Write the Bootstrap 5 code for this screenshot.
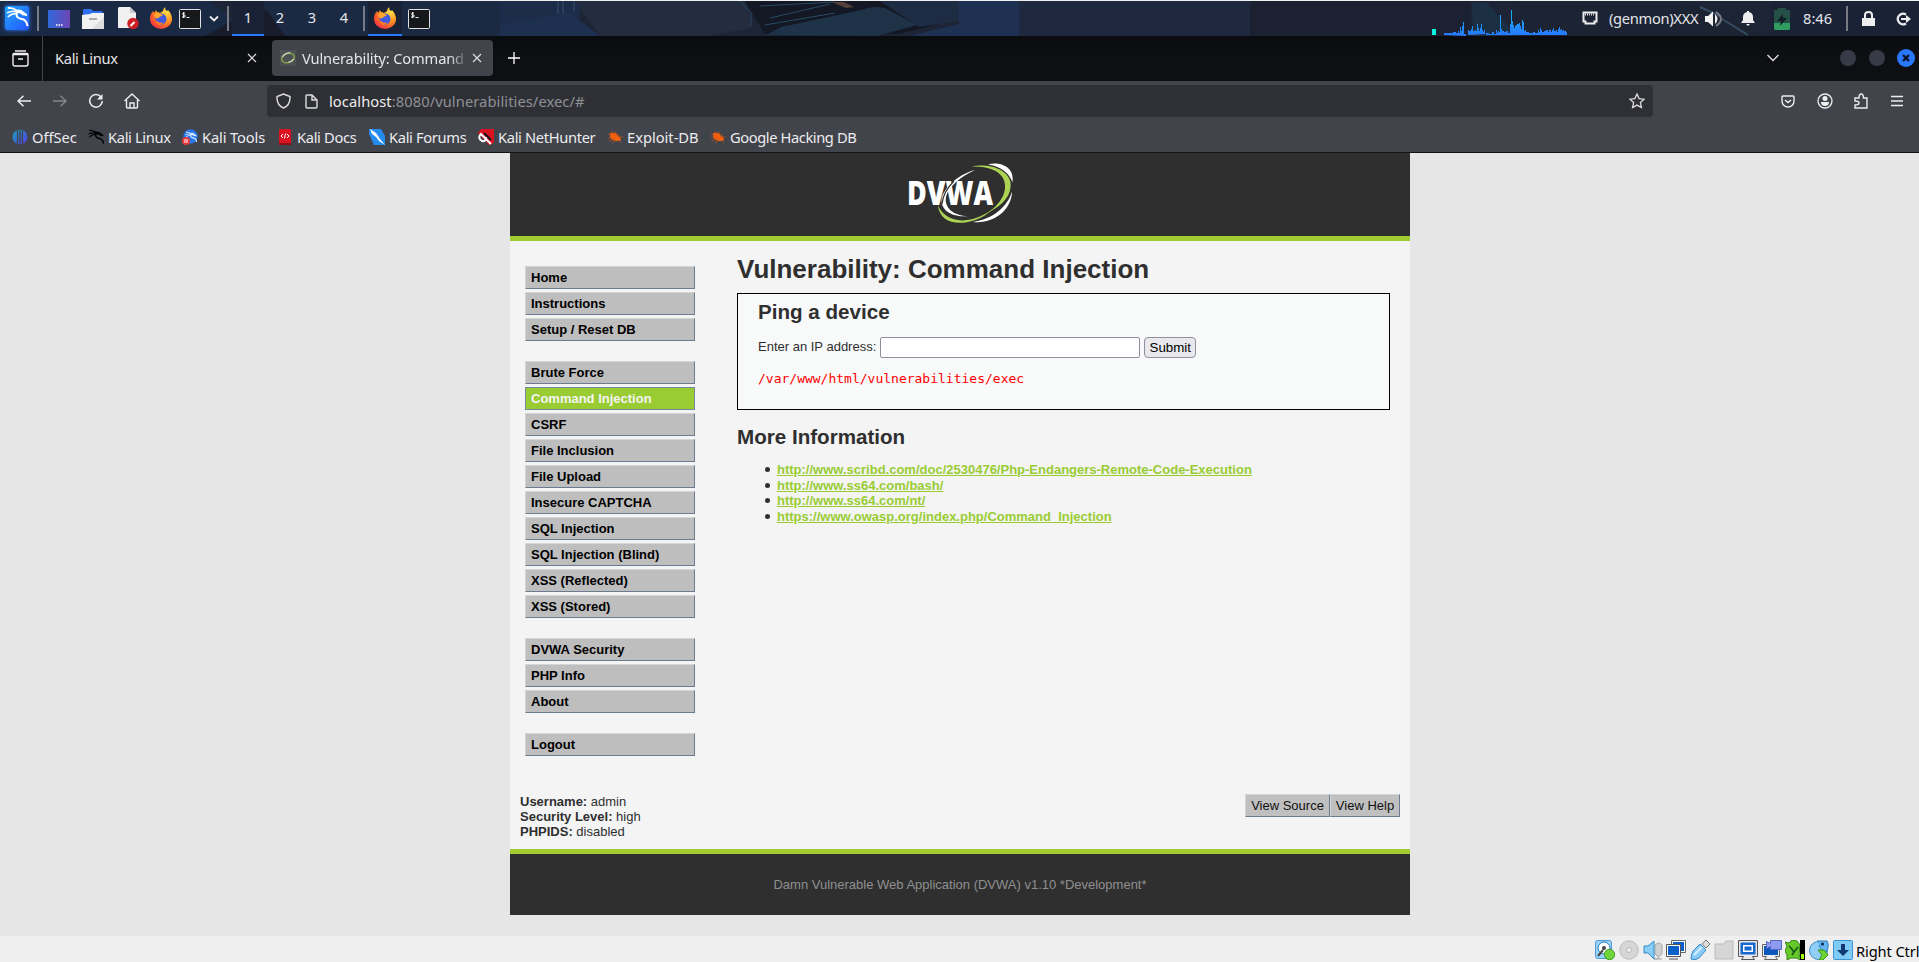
<!DOCTYPE html>
<html lang="en">
<head>
<meta charset="utf-8">
<title>Vulnerability: Command Injection</title>
<link href="https://cdn.jsdelivr.net/npm/bootstrap@5.3.0/dist/css/bootstrap.min.css" rel="stylesheet">
<style>
body{width:1919px;height:962px;overflow:hidden;background:#e6e6e6;font-family:"Noto Sans",sans-serif;font-size:14.67px;line-height:20px}
svg{display:block;flex:none}
.panel{height:36px;border-top:1px solid #eef1f0;color:#e4e6ea;position:relative;background:#1d2436}
.wall{position:absolute;inset:0}
.panel>.d-flex{position:relative}
.sep{width:2px;height:25px;background:#777b83;flex:none}
.ws{width:32px;height:35px;line-height:32px;text-align:center;border-bottom:2px solid transparent}
.ws.on{border-color:#2777ff;background:#182135}
.tabs{height:45px;background:linear-gradient(#0a0b0e,#0e0f13 40%);color:#e6e6e8;padding-bottom:1px}
.listall{width:43px;height:45px;border-right:1px solid #44464b}
.tab-on{width:221px;height:36px;border-radius:4px;background:#42444b;padding:0 12px 0 8px}
.fade-title{width:168px;white-space:nowrap;letter-spacing:-.16px;-webkit-mask-image:linear-gradient(90deg,#000 148px,transparent 166px);mask-image:linear-gradient(90deg,#000 148px,transparent 166px)}
.tools{height:41px;background:#42444c;padding-bottom:1px}
.urlbar{width:1386px;height:32px;border-radius:4px;background:#2f3035;color:#8f9095}
.marks{height:31px;background:#42444c;border-bottom:1px solid #121317;color:#ececee;padding:0 0 1px 12px}
.marks>div{gap:4px;white-space:nowrap;flex:none;letter-spacing:-.33px}
.marks>.wide{letter-spacing:0}
.dot{width:16px;height:16px;border-radius:50%;background:#373b48}
.page{height:783px;font-family:"Liberation Sans",sans-serif;font-size:13px;line-height:15px;color:#2f2f2f}
.shell{width:900px;background:#f4f4f4}
.top{height:88px;border-bottom:5px solid #a0cc32;background:#2f2f2f}
.mid{height:608px}
.side{width:170px;margin:25px 0 0 15px}
.side a{display:block;height:23px;margin-bottom:3px;padding:3px 5px;border:1px solid;border-color:#d3d5d7 #6d7b92 #6d7b92 #d3d5d7;background:#bebebe;color:#000;font-weight:bold;text-decoration:none;line-height:15px}
.side .last-link{margin-bottom:20px}
.side a.here{background:#9c3;color:#f4f4f4;border-color:#7489a0}
.main{width:653px;margin:12px 0 0 42px}
.main h1{font-size:26px;line-height:32px;font-weight:bold;margin:0 0 8px}
.main h2{font-size:20.6px;line-height:24px;font-weight:bold;margin:0}
.ping{height:117px;border:1px solid #000;background:#f8fafa;padding:6px 20px}
.ip{width:260px;height:21px;border:1px solid #8f8f9d;border-radius:2px;background:#fff;margin:0 4px}
.go{width:52px;height:21px;border:1px solid #8f8f9d;border-radius:4px;background:#e9e9ed;font-size:13.33px;line-height:19px;padding:0;color:#000}
.ping pre{font:13px/16px "DejaVu Sans Mono",monospace;color:red;margin:13px 0 0}
.refs{margin:13px 0 0;padding-left:40px;line-height:15.6px;list-style:none}
.refs li::before{content:"";display:inline-block;width:5px;height:5px;border-radius:50%;background:#2f2f2f;margin:0 7px 2px -12px;vertical-align:middle}
.refs a{color:#9c3;font-weight:bold}
.foot{height:66px;border-top:5px solid #a0cc32;background:#2f2f2f;color:#8f8f8f;padding-top:23px}
.vb{height:23px;border:1px solid;border-color:#d3d5d7 #6d7b92 #6d7b92 #d3d5d7;background:#c0c0c0;color:#111;font-size:13px;line-height:21px;text-align:center}
.status{height:26px;background:#efefef;color:#000;padding-left:1595px}
</style>
</head>
<body>
<svg width="0" height="0" class="position-absolute" aria-hidden="true"><defs>
<linearGradient id="kg" x2="1" y2="1"><stop stop-color="#22a5f8"/><stop offset="1" stop-color="#2456ff"/></linearGradient>
<linearGradient id="dg" x2="1"><stop stop-color="#3169dc"/><stop offset="1" stop-color="#6d45b5"/></linearGradient>
<radialGradient id="fg" cx=".75" cy=".2" r=".9"><stop stop-color="#ffe14a"/><stop offset=".5" stop-color="#ff9320"/><stop offset="1" stop-color="#f4303f"/></radialGradient>
<linearGradient id="og" x2="1" y2="1"><stop stop-color="#13a6b8"/><stop offset="1" stop-color="#5935e8"/></linearGradient>
<linearGradient id="cg" x1="0" y1="0" x2="0" y2="26" gradientUnits="userSpaceOnUse"><stop stop-color="#17b6ee"/><stop offset="1" stop-color="#2777ff"/></linearGradient>
<symbol id="dragon" viewBox="0 0 24 24"><g fill="none" stroke="currentColor" stroke-width="1.800"><path d="M2 2q7 0 11 4M1 7.500q6-3 12-1M2 12q4-4 10-4"/><path d="M13 6q-3 4 0 6.500Q15 14 18.500 14.500 22.500 16 23.500 22" stroke-width="2.200"/></g><path fill="currentColor" d="M10 5q5-3 9 1l4 3v2l-5-1q-3-3-7-2z"/></symbol>
<symbol id="fox" viewBox="0 0 22 22"><path fill="url(#fg)" d="M15 0q0 3 2 4l1-1q4 4 4 9a11 10 0 0 1-22 0Q0 7 3 4l1 2 2-3 1 2q2 0 3 1l3-2q0-2 2-4z"/><circle cx="11" cy="12" r="5.500" fill="#3d5ae0"/><path fill="#ffa62b" d="M4 7q4-2 7 0l2 2q-4 0-4 2-3 1-4-1z"/><path d="M6 13q3 4 8 2-2 3-5 3-3-1-3-5z" fill="#ff7b25"/></symbol>
<symbol id="term" viewBox="0 0 22 20"><rect x=".5" y=".5" width="21" height="19" rx="1" fill="#171819" stroke="#dfe1e3"/><path d="M6 4H4v2h2v2H3M4.500 3v6M7.500 8.500h3" stroke="#eee" fill="none"/></symbol>
<symbol id="bug" viewBox="0 0 16 14"><path fill="#f2600e" d="M3 3l2 0q4-1 6 3l2 1 1 3-2 1-3 0q-4 0-6-4z"/><path d="M1 4l4 1M4 1l3 3M8 1l2 4M12 4l-1 3M12 7h4M2 11l5-2M5 13l4-3M1 8l4 0M12 10l2 3" stroke="#b9511e" stroke-width=".8" fill="none"/></symbol>
</defs></svg>

<header class="panel">
  <svg class="wall" width="1919" height="35"><path fill="#1b2a44" d="M0 0h210l45 35H0z"/><path fill="#181c2b" d="M205 35l45-25h25l20 25z"/><path fill="#1c2942" d="M260 0h240v35H285z"/><path fill="#1d2c49" d="M500 0h80v35h-80z"/><path fill="#242c40" d="M575 0h170l7 27-45 8H600z"/><path fill="#1e3050" d="M500 24l70-12 30 23H500z"/><path d="M558 0v13M563 0v13M574 0v10" stroke="#35536b" fill="none"/><path d="M740 0l11 12v13" stroke="#2b4663" fill="none"/><path fill="#131824" d="M745 0h200l14 18-60 15H765z"/><path fill="#1e3248" d="M766 34l15-8 80-17q12-5 24-2l32 17-40 11z"/><path d="M760 5l75-4M770 17l60-14M765 24l70-12" stroke="#274c64" stroke-width="1" fill="none"/><path fill="#54403b" d="M832 1h12l10 5-8 1z"/><path fill="#1d2c42" d="M880 0h79v20l-40 6z"/><path fill="#1f3152" d="M959 0h60v35h-110l50-12z"/><path fill="#1e2940" d="M1019 0h370l20 35H1019z"/><path fill="#1c2131" d="M1250 0h220v35h-220z"/><path fill="#1c3044" d="M1472 2h15l30 33h-44z"/><path fill="#1c2332" d="M1517 0h170l80 35h-240z"/><path d="M1700 6l20 9M1722 18l26 16" stroke="#354d62" stroke-width="2"/><path fill="#1a2236" d="M1770 0h149v35h-149z"/></svg>
  <div class="d-flex align-items-center h-100">
    <svg width="24" height="24" style="margin:0 0 1px 5px;box-shadow:0 0 4px #2777ff;color:#fff"><rect width="24" height="24" rx="2" fill="url(#kg)"/><use href="#dragon" width="24" height="22"/></svg>
    <i class="sep" style="margin-left:8px"></i>
    <svg width="22" height="18" style="margin-left:9px"><rect width="22" height="18" rx="1" fill="url(#dg)"/><path d="M8 15h1.500m1 0h1.500m1 0h1.500" stroke="#fff" stroke-width="1.500"/></svg>
    <svg width="22" height="20" style="margin-left:12px"><path fill="#2f6ff0" d="M2 0h7l2 2h8q2 0 2 2v4H1V1z"/><path fill="#f1f1f1" d="M0 6l8-1 2-1h12v16H0z"/><path fill="#ddd" d="M22 8v12H10z"/><path d="M7 10h8" stroke="#aaa" stroke-width="2"/></svg>
    <svg width="21" height="23" style="margin-left:14px"><path fill="#f0f0f0" d="M1 0h11l6 6v15H0V1z"/><path fill="#c7c7c7" d="M12 0l6 6h-6z"/><circle cx="15" cy="16.500" r="5.700" fill="#ce1e23"/><path d="M12.500 19l4-4" stroke="#fff" stroke-width="2"/></svg>
    <svg width="22" height="22" style="margin:0 0 1px 11px"><use href="#fox"/></svg>
    <svg width="22" height="20" style="margin-left:7px"><use href="#term"/></svg>
    <svg width="10" height="8" style="margin-left:8px"><path d="M1 1.500l4 4 4-4" fill="none" stroke="#eee" stroke-width="1.800"/></svg>
    <i class="sep" style="margin-left:8px"></i>
    <div class="ws on" style="margin-left:3px">1</div><div class="ws">2</div><div class="ws">3</div><div class="ws">4</div>
    <i class="sep" style="margin-left:3px"></i>
    <div class="ws on d-flex align-items-center justify-content-center" style="margin-left:3px;width:34px"><svg width="22" height="22"><use href="#fox"/></svg></div>
    <svg width="22" height="20" style="margin-left:6px"><use href="#term"/></svg>
    <svg width="141" height="26" style="margin:9px 0 0 1002px"><path fill="#00f5dc" d="M0 19h4v6H0z"/><path fill="url(#cg)" d="M12 25v-2h9v-1h3v1h2v-2h1v2h1v-6h1v4h1v-5h1v-4h1v12h2v2zM36 25v-5h1v1h2v-2h1v-3h1v5h2v-1h1v1h1v-7h1v4h1v3h1v-3h1v-4h1v6h1v2h1v-2h1v4zM54 25v-2h3v1h3v-2h2v2h2v-4h1v3h1v-2h1v1h1V5h1v14h1v2h2v1h2v-1h2v2h2v-9h1V-1h1v12h1v4h1v3h1v-2h1v-1h1v-1h2v-1h1v3h1v3h1v-9h1v2h1v9h1v-1h1v2h3v1h4v-1h2v1h3v-3h1v2h1v-4h1v2h1v2h2v-1h2v-1h2v2h1v-2h2v2h1v-2h1v-2h1v3h2v-1h1v2h1v-3h1v-2h1v3h1v-1h1v2h1v-1h1v1h2v1h1v3z"/></svg>
    <svg width="17" height="15" style="margin:0 0 1px 9px"><path d="M1.500 1.500h13v9h-2v2h-9v-2h-2z" fill="none" stroke="#ededed" stroke-width="2"/><path d="M3 3.500h10" stroke="#ddd" stroke-width="2" stroke-dasharray="1 1"/></svg>
    <span style="margin:0 0 2px 10px;width:89px;letter-spacing:-.3px">(genmon)XXX</span>
    <svg width="18" height="18" style="margin-left:7px"><path fill="#f2f2f2" d="M0 6h3l5-4.500v15L3 12H0z"/><path fill="#eee" d="M10 4q5 5 0 10z"/><path d="M11 2q10 7 0 14" stroke="#777d87" stroke-width="2" fill="none"/></svg>
    <svg width="14" height="15" style="margin-left:18px"><path fill="#eee" d="M0 12l2-3V6q0-4 4-5V0h2v1q4 1 4 5v3l2 3zM5 13h4l-2 2z"/></svg>
    <svg width="16" height="22" style="margin-left:19px"><path fill="#245047" d="M4 0h8v2h4v20H0V2h4z"/><path fill="#2f9d60" d="M0 15h16v5q0 2-2 2H2q-2 0-2-2z"/><path fill="#111d24" d="M9 6l-6 7h4l-1 5 7-8H9z"/></svg>
    <span style="margin:0 0 2px 13px;width:31px;white-space:nowrap">8:46</span>
    <i class="sep" style="margin-left:12px"></i>
    <svg width="13" height="15" style="margin-left:14px"><path fill="#eee" d="M0 7h13v8H0z"/><path d="M3 7V4q0-3 3.500-3T10 4v3" fill="none" stroke="#eee" stroke-width="2"/></svg>
    <svg width="15" height="14" style="margin-left:21px"><path d="M10 2.500a5.300 5.300 0 1 0 0 9" fill="none" stroke="#eee" stroke-width="2.200"/><path fill="#eee" d="M5 6h5V3l5 4-5 4V8H5z"/></svg>
  </div>
</header>

<nav class="tabs d-flex align-items-center">
  <div class="listall d-flex align-items-center ps-2"><svg width="17" height="17" style="margin-left:4px" fill="none" stroke="#eee" stroke-width="1.400"><path d="M3 1h11M1 4.500h15M1 4.500q0-1 1-1h13q1 0 1 1V14q0 2-2 2H3q-2 0-2-2zM6 9h5"/></svg></div>
  <div class="d-flex align-items-center" style="width:229px;padding-left:12px"><span style="letter-spacing:-.33px">Kali Linux</span><svg class="ms-auto" style="margin-right:15px" width="10" height="10"><path d="M1 1l8 8M9 1L1 9" stroke="#ddd" stroke-width="1.200"/></svg></div>
  <div class="tab-on d-flex align-items-center">
    <svg width="16" height="16"><rect width="16" height="16" fill="#4d5055"/><g fill="none" transform="rotate(-20 8 8)"><ellipse cx="8" cy="8" rx="6.500" ry="4.500" stroke="#7f9e45" stroke-width="1.600"/><path d="M3 5q5-3 9-1M13 11q-3 2-6 1" stroke="#e0e3d8"/></g></svg>
    <span class="fade-title" style="margin-left:6px">Vulnerability: Command In</span>
    <svg width="10" height="10" style="margin-left:2px"><path d="M1 1l8 8M9 1L1 9" stroke="#ddd" stroke-width="1.200"/></svg>
  </div>
  <svg width="12" height="12" style="margin-left:15px"><path d="M6 0v12M0 6h12" stroke="#fff" stroke-width="1.300"/></svg>
  <svg width="12" height="8" style="margin-left:1247px"><path d="M.500 1l5.500 5.500L11.500 1" stroke="#ddd" stroke-width="1.400" fill="none"/></svg>
  <i class="dot" style="margin-left:61px"></i><i class="dot" style="margin-left:13px"></i>
  <svg width="18" height="18" style="margin-left:12px"><circle cx="9" cy="9" r="9" fill="#2777ff"/><path d="M6 6l6 6M12 6l-6 6" stroke="#0b1020" stroke-width="2.300"/></svg>
</nav>

<div class="tools d-flex align-items-center">
  <svg width="14" height="12" style="margin-left:17px"><path d="M14 6H1M6.500.700L1 6l5.500 5.300" fill="none" stroke="#eee" stroke-width="1.500"/></svg>
  <svg width="14" height="12" style="margin-left:22px"><path d="M0 6h13M7.500.700L13 6l-5.500 5.300" fill="none" stroke="#84868b" stroke-width="1.500"/></svg>
  <svg width="16" height="16" style="margin-left:21px"><path d="M13 4a6.300 6.300 0 1 0 1.300 4" fill="none" stroke="#eee" stroke-width="1.500"/><path d="M14.500 1v5.500H9z" fill="#eee"/></svg>
  <svg width="16" height="16" style="margin-left:20px" fill="none" stroke="#eee" stroke-width="1.400"><path d="M.500 8L8 1l7.500 7M2.500 7v7q0 1 1 1h9q1 0 1-1V7M6 15v-5h4v5"/></svg>
  <div class="urlbar d-flex align-items-center" style="margin-left:127px">
    <svg width="15" height="16" style="margin-left:9px"><path d="M7.500 1L14 3.500q.5 8.500-6.500 11.500Q.5 12 1 3.500z" fill="none" stroke="#ddd" stroke-width="1.400"/></svg>
    <svg width="13" height="15" style="margin-left:14px"><path d="M2 1h5l5 5v7q0 1-1 1H2q-1 0-1-1V2q0-1 1-1zM7 1v5h5" fill="none" stroke="#ddd" stroke-width="1.400"/></svg>
    <span style="margin:0 0 1px 11px;letter-spacing:.09px"><span style="color:#eee">localhost</span>:8080/vulnerabilities/exec/#</span>
    <svg class="ms-auto" style="margin-right:8px" width="16" height="16"><path d="M8 1l2.100 4.600 5 .6-3.700 3.400 1 5L8 12.100l-4.400 2.500 1-5L.900 6.200l5-.6z" fill="none" stroke="#ddd" stroke-width="1.300"/></svg>
  </div>
  <svg width="14" height="13" style="margin-left:128px" fill="none" stroke="#eee" stroke-width="1.400"><path d="M1 2q0-1 1-1h10q1 0 1 1v4a6 6 0 0 1-12 0zM4 5l3 2.500L10 5"/></svg>
  <svg width="16" height="16" style="margin-left:22px"><circle cx="8" cy="8" r="7" fill="none" stroke="#eee" stroke-width="1.300"/><circle cx="8" cy="5.500" r="2.500" fill="#eee"/><path d="M4 9h8q0 4-4 4T4 9z" fill="#eee"/></svg>
  <svg width="14" height="17" style="margin-left:21px"><path d="M1 5h4q0-4 2.200-4T9.500 5H13v10H1v-3q4 0 4-2T1 8z" fill="none" stroke="#eee" stroke-width="1.400"/></svg>
  <svg width="12" height="12" style="margin-left:23px"><path d="M0 1.500h12M0 6h12M0 10.500h12" stroke="#eee" stroke-width="1.300"/></svg>
</div>

<div class="marks d-flex align-items-center">
  <div class="wide d-flex align-items-center" style="width:76px"><svg width="16" height="16"><circle cx="8" cy="8" r="7.500" fill="url(#og)"/><path d="M8 0v16M5 0q1.500 8 0 16M11 0q-1.500 8 0 16" stroke="#42444c" stroke-width="1.300" fill="none"/></svg>OffSec</div>
  <div class="d-flex align-items-center" style="width:94px"><svg width="16" height="16" style="color:#000"><use href="#dragon"/></svg>Kali Linux</div>
  <div class="d-flex align-items-center" style="width:95px;letter-spacing:-.12px"><svg width="16" height="16" style="color:#dbeaff"><circle cx="8.500" cy="7.500" r="7.200" fill="#2878ec"/><use href="#dragon" x="3" y="2" width="12" height="12"/><circle cx="4" cy="12" r="4" fill="#e83939"/><path d="M3 10v4M5 10v4" stroke="#fff"/></svg>Kali Tools</div>
  <div class="d-flex align-items-center" style="width:92px"><svg width="16" height="16"><rect x="2" width="12" height="16" rx="1" fill="#db1220"/><path d="M2 14h12v2H2z" fill="#8d0d18"/><path d="M6 5L4 7l2 2M10 5l2 2-2 2M8.500 4.500l-1 5" stroke="#fff" fill="none"/></svg>Kali Docs</div>
  <div class="d-flex align-items-center" style="width:109px"><svg width="16" height="16"><path fill="#248bf1" d="M0 0h16v16H0z"/><path fill="#42444c" d="M0 5l5 11H0zM16 0v7L12 0z"/><path fill="#fff" d="M1 0l6 4 4 6 5 6-6-4-3-4-4-3z"/></svg>Kali Forums</div>
  <div class="d-flex align-items-center" style="width:129px"><svg width="16" height="16"><path fill="#db1220" d="M3 0h13v13q-2 3-5 3L0 4z"/><path d="M13 15L3 5q-4 4 1 7 4 1 4-4" stroke="#fff" stroke-width="2" fill="none"/><path d="M6 4l7 7" stroke="#171717" stroke-width="2"/></svg>Kali NetHunter</div>
  <div class="wide d-flex align-items-center" style="width:103px"><svg width="16" height="14"><use href="#bug"/></svg>Exploit-DB</div>
  <div class="d-flex align-items-center" style="letter-spacing:-.4px"><svg width="16" height="14"><use href="#bug"/></svg>Google Hacking DB</div>
</div>

<main class="page">
  <div class="shell mx-auto" style="position:relative;left:.5px">
    <div class="top"><svg width="120" height="80" style="margin-left:390px">
      <path fill="#fff" d="M75 17C60 21 46 32 42 44c-3 11 8 21 26 19C54 63 44 55 46 44 48 34 60 24 75 17z"/>
      <path fill="#acd354" d="M70 13.700C87 10 107 15 110.500 29 112 42 104 51 88 60 101 50 108 39 104 27 100 17 86 13 70 13.700z"/>
      <text x="7" y="51.500" font-family="Open Sans,Noto Sans,sans-serif" font-weight="800" font-size="33" fill="#fff" textLength="86" lengthAdjust="spacingAndGlyphs">DVWA</text>
      <path d="M54 28Q43 39 42 51" stroke="#2f2f2f" stroke-width="1.200" fill="none"/>
      <path fill="#acd354" d="M38 52c1 16 17 21 34 16 9-2 17-8 22-13-9 7-18 11-27 12-13 2-25-4-29-15z"/>
      <path fill="#fff" d="M88 11.500c10-3 27 1 24.500 18C109 20 102 14 88 11.500zM112 38.500C112 55 96 71 73 69 92 66 107 55 112 38.500z"/></svg></div>
    <div class="mid">
      <div class="d-flex" style="height:541px">
        <nav class="side">
          <a href="#">Home</a><a href="#">Instructions</a><a href="#" class="last-link">Setup / Reset DB</a>
          <a href="#">Brute Force</a><a href="#" class="here">Command Injection</a><a href="#">CSRF</a><a href="#">File Inclusion</a><a href="#">File Upload</a><a href="#">Insecure CAPTCHA</a><a href="#">SQL Injection</a><a href="#">SQL Injection (Blind)</a><a href="#">XSS (Reflected)</a><a href="#" class="last-link">XSS (Stored)</a>
          <a href="#">DVWA Security</a><a href="#">PHP Info</a><a href="#" class="last-link">About</a>
          <a href="#">Logout</a>
        </nav>
        <section class="main">
          <h1>Vulnerability: Command Injection</h1>
          <div class="ping">
            <h2>Ping a device</h2>
            <div class="d-flex align-items-center" style="margin-top:13px"><span style="margin-bottom:2px">Enter an IP address:</span><input class="ip" type="text" aria-label="IP address"><button class="go">Submit</button></div>
            <pre>/var/www/html/vulnerabilities/exec</pre>
          </div>
          <h2 style="margin-top:15px">More Information</h2>
          <ul class="refs">
            <li><a href="#">http://www.scribd.com/doc/2530476/Php-Endangers-Remote-Code-Execution</a></li>
            <li><a href="#">http://www.ss64.com/bash/</a></li>
            <li><a href="#">http://www.ss64.com/nt/</a></li>
            <li><a href="#">https://www.owasp.org/index.php/Command_Injection</a></li>
          </ul>
        </section>
      </div>
      <div class="d-flex justify-content-between" style="padding:12px 10px 0">
        <div>
          <b>Username:</b> admin<br><b>Security Level:</b> high<br><b>PHPIDS:</b> disabled</div>
        <div class="d-flex"><div class="vb" style="width:85px">View Source</div><div class="vb" style="width:70px">View Help</div></div>
      </div>
    </div>
    <div class="foot text-center">Damn Vulnerable Web Application (DVWA) v1.10 *Development*</div>
  </div>
</main>

<footer class="status d-flex align-items-center">
  <div class="d-flex" style="gap:3.800px;padding-top:2px">
    <svg width="20" height="20"><rect x=".500" y=".500" width="16" height="18" rx="2" fill="#9bd3f8" stroke="#4a9bd8"/><circle cx="9" cy="8" r="6" fill="#fff" stroke="#277cc0"/><circle cx="9" cy="8" r="2" fill="#444"/><path d="M3 16l5-6" stroke="#444" stroke-width="2"/><circle cx="14.500" cy="14.500" r="5.200" fill="#70d53c" stroke="#419a25"/></svg>
    <svg width="20" height="20"><circle cx="10" cy="10" r="9.200" fill="#d6d6d6" stroke="#bbb"/><circle cx="10" cy="10" r="2.500" fill="#eee" stroke="#bbb"/></svg>
    <svg width="20" height="20"><path d="M12 5q4-4 7 0v9q-3 4-7 0zM15 16v3h-4 8" fill="#d0d0d0" stroke="#aaa"/><path d="M1 6h4l6-5v18l-6-6H1z" fill="#88cdf8" stroke="#378cc8"/></svg>
    <svg width="20" height="20"><path d="M5.500 .500h14v12h-14z" fill="#fff" stroke="#666"/><path d="M7 2h11v9H7z" fill="#0b61c9"/><path d="M.500 4.500h14v12H.500zM3 19h9" fill="#fff" stroke="#555"/><path d="M2 6h11v9H2z" fill="#0b61c9"/></svg>
    <svg width="20" height="20"><path d="M12 4l4-4 4 4-4 4z" fill="#ddd" stroke="#777"/><path d="M10 4l6 6-7 8q-4 3-8 1 0-4 2-8z" fill="#8acbf8" stroke="#338bca"/><path d="M4 15l8-8" stroke="#d9f1ff" stroke-width="2"/></svg>
    <svg width="20" height="20"><path d="M1 4h9l2-3h7v18H1z" fill="#d6d6d6" stroke="#bbb"/></svg>
    <svg width="20" height="20"><path d="M.500 .500h19v16h-5l2 3h-13l2-3h-5z" fill="#e8e8e8" stroke="#555"/><path d="M2.500 2.500h15v12h-15z" fill="#1667cf"/><path d="M5 5h10v7H5z" fill="#fff"/><path d="M6.500 6.500h7v4h-7z" fill="#1667cf"/></svg>
    <svg width="20" height="20"><path d="M.500 4.500h17v12h-4l2 3h-13l2-3h-4z" fill="#eee" stroke="#666"/><path d="M2 6h14v9H2z" fill="#0b58bd"/><path d="M4.500 1.500l4 2v-3h11v9h-11v-3l-4 2z" fill="#8d9cf1" stroke="#5667c5"/></svg>
    <svg width="20" height="20"><path d="M0 2l4 1 3-3 5 1 3 4-1 9 2 6-5-2-5 0-4 2 0-5-2-4 2-5z" fill="#65c929" stroke="#35831a"/><path d="M6 8l3 4 4-5M4 6l2 2M7 15l2-3" stroke="#145a15" stroke-width="1.700" fill="none"/><path d="M15 0h5v20h-5z" fill="#000"/><path d="M16 14h3v5h-3z" fill="#9f0"/></svg>
    <svg width="20" height="20"><circle cx="9.500" cy="10.500" r="9" fill="#91cff9" stroke="#388ac5"/><path d="M8 1h10q3 5-1 11-5-1-7-7" fill="#65b6f0" stroke="#287cba"/><circle cx="13.500" cy="4" r="1.500" fill="#124"/><path d="M9 10h6l4 5-5 5h-4l3-5z" fill="#6fd532" stroke="#3b911e"/></svg>
    <svg width="20" height="20"><rect x=".500" y=".500" width="19" height="19" rx="1" fill="#80caf6" stroke="#3c94d2"/><path d="M8 4h4v6h4l-6 6-6-6h4z" fill="#113a74"/></svg>
  </div>
  <span style="margin:3px 0 0 3px;white-space:nowrap;letter-spacing:-.1px">Right Ctrl</span>
</footer>
<script src="https://cdn.jsdelivr.net/npm/bootstrap@5.3.0/dist/js/bootstrap.bundle.min.js"></script>
</body>
</html>
